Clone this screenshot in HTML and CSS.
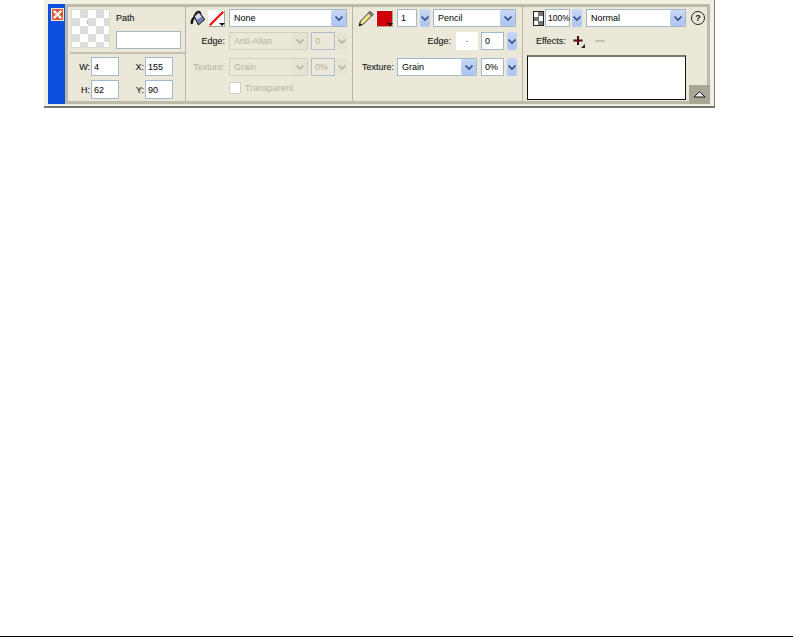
FILE: index.html
```html
<!DOCTYPE html>
<html lang="en">
<head>
<meta charset="utf-8">
<title>Property Inspector</title>
<link rel="stylesheet" href="styles.css">
</head>
<body>
<div class="panel">
  <div class="strip">
    <div class="close"><svg width="9" height="9" viewBox="0 0 9 9"><path d="M1.500 1.500l6 6M7.500 1.500l-6 6" stroke="#fff" stroke-width="2.100" stroke-linecap="square"/></svg></div>
  </div>
  <div class="body">
    <section class="sec s1">
      <div class="s1-top">
        <div class="preview"><i class="mark"></i></div>
        <div class="s1-name">
          <div class="path">Path</div>
          <div class="fld name"></div>
        </div>
      </div>
      <div class="s1-rows">
        <div class="row"><span class="lbl wl">W:</span><div class="fld num">4</div><span class="lbl xl">X:</span><div class="fld num">155</div></div>
        <div class="row"><span class="lbl wl">H:</span><div class="fld num">62</div><span class="lbl xl">Y:</span><div class="fld num">90</div></div>
      </div>
    </section>

    <section class="sec s2">
      <div class="row r1">
        <svg class="ic-bucket" width="15" height="16" viewBox="0 0 15 16"><path d="M5 5.500C5 1.500 9.500-.5 11 3.500" fill="none" stroke="#111" stroke-width="1.300"/><path d="M4 6l5-4 5.500 7.500L8.500 14.500z" fill="#d7dcf2" stroke="#111" stroke-width="1.200"/><path d="M9 14l-2.500-4 5-3 2.500 2.500z" fill="#6f7cb8"/><path d="M4.500 5.500C2 7.500.3 10.500.6 13c.3 1.700 2 1.800 2.400.2.300-1.700.2-3 1.500-4.200z" fill="#111"/></svg>
        <div class="swatch none"><svg width="15" height="15" viewBox="0 0 15 15"><path d="M.8 14.200L14.200.8" stroke="#f00c0c" stroke-width="2.200"/></svg><i class="tick"></i></div>
        <div class="sel w118"><span class="t">None</span><b class="arr"></b></div>
      </div>
      <div class="row r2">
        <span class="lbl side">Edge:</span>
        <div class="sel off w79"><span class="t">Anti-Alias</span><b class="arr"></b></div>
        <div class="fld off sm">0</div>
        <b class="spin off"></b>
      </div>
      <div class="row r3">
        <span class="lbl side dim">Texture:</span>
        <div class="sel off w79"><span class="t">Grain</span><b class="arr"></b></div>
        <div class="fld off sm">0%</div>
        <b class="spin off"></b>
      </div>
      <div class="row r4">
        <i class="check"></i><span class="lbl dim trans">Transparent</span>
      </div>
    </section>

    <section class="sec s3">
      <div class="row r1">
        <svg class="ic-pencil" width="16" height="17" viewBox="0 0 16 17"><path d="M1 16l1.500-5L12 1.500l3 3L5.500 14z" fill="#f0e28c" stroke="#333" stroke-width="1"/><path d="M12 1.500l3 3-1.500 1.500-3-3z" fill="#8f8f8f" stroke="#333" stroke-width=".6"/><path d="M1 16l.8-3 2.200 2z" fill="#111"/></svg>
        <div class="swatch red"><i class="fill"></i><i class="tick"></i></div>
        <div class="fld one">1</div>
        <b class="spin"></b>
        <div class="sel w83"><span class="t">Pencil</span><b class="arr"></b></div>
      </div>
      <div class="row r2">
        <span class="lbl edge3">Edge:</span>
        <div class="dot">&middot;</div>
        <div class="fld sm3">0</div>
        <b class="spin"></b>
      </div>
      <div class="row r3">
        <span class="lbl tex3">Texture:</span>
        <div class="sel w80"><span class="t">Grain</span><b class="arr"></b></div>
        <div class="fld sm3 wide">0%</div>
        <b class="spin"></b>
      </div>
    </section>

    <section class="sec s4">
      <div class="row r1">
        <div class="ic-opacity"></div>
        <div class="fld pct">100%</div>
        <b class="spin"></b>
        <div class="sel w100"><span class="t">Normal</span><b class="arr"></b></div>
        <div class="help">?</div>
      </div>
      <div class="row r2 fx">
        <span class="lbl">Effects:</span>
        <svg class="ic-plus" width="13" height="13" viewBox="0 0 13 13"><path d="M5 1h2v3.500h3.500v2H7V10H5V6.500H1.500v-2H5z" fill="#2a0a0a"/><path d="M5.500 2v7M2.500 5.500h7" stroke="#8a1010" stroke-width=".7"/><path d="M13 9v4H9z" fill="#222"/></svg>
        <i class="minus"></i>
      </div>
      <div class="effects"></div>
    </section>

    <div class="collapse"><svg width="13" height="7" viewBox="0 0 13 7"><path d="M6.500 .8L12 6H1z" fill="#fff" stroke="#111" stroke-width="1"/></svg></div>
  </div>
</div>
<div class="rule"></div>
</body>
</html>
```

FILE: styles.css
```css
* { box-sizing: border-box; }
html, body { height: 100%; }
body {
  margin: 0;
  background: #fff;
  display: flex;
  flex-direction: column;
  font: 9px "Liberation Sans", Arial, sans-serif;
  color: #111;
}
.panel {
  width: 671px;
  height: 108px;
  margin-left: 44px;
  padding: 4px 4px 2px 4px;
  display: flex;
  background: #f1efe3;
  border-bottom: 2px solid #77766c;
  border-right: 1px solid #77766c;
}
.strip {
  width: 17px;
  background: #0a4fe0;
  padding: 4px 0 0 3px;
}
.close {
  width: 13px;
  height: 13px;
  background: #dc5a36;
  border: 1px solid #f8e6da;
  display: flex;
  align-items: center;
  justify-content: center;
}
.body {
  position: relative;
  flex: 1;
  display: flex;
  height: 100px;
  background: #ebe8d9;
  border: 3px solid #bdbaaa;
}
.sec { border-right: 1px solid #b8b5a5; flex: none; }
.row { display: flex; align-items: center; }
.lbl { white-space: nowrap; text-shadow: 0 0 1px rgba(0, 0, 0, .15); }
.s1 { width: 118px; }
.s1-top {
  height: 47px;
  padding: 2px 0 0 1px;
  margin-left: 2px;
  display: flex;
  border-bottom: 2px solid #c4c1b1;
}
.preview {
  position: relative;
  width: 39px;
  height: 39px;
  background-color: #fff;
  background-image: conic-gradient(#dcdcdc 25%, #fff 0 50%, #dcdcdc 0 75%, #fff 0);
  background-size: 16px 16px;
  border: 1px solid #dedbcc;
}
.mark {
  position: absolute;
  left: 15px;
  top: 10px;
  width: 1px;
  height: 4px;
  background: #e8a8a8;
}
.s1-name { margin-left: 6px; }
.path { height: 22px; padding-top: 4px; text-shadow: 0 0 1px rgba(0, 0, 0, .15); }
.fld {
  background: #fff;
  border: 1px solid #a3b7cb;
  height: 19px;
  padding: 0 0 0 2px;
  display: flex;
  align-items: center;
  text-shadow: 0 0 1px rgba(0, 0, 0, .15);
}
.name { width: 65px; height: 18px; }
.s1-rows { padding-top: 3px; }
.s1-rows .row + .row { margin-top: 4px; }
.wl { width: 23px; text-align: right; padding-right: 1px; }
.xl { width: 26px; text-align: right; padding-right: 1px; }
.num { width: 28px; }

.s2 { width: 167px; padding-left: 4px; }
.s3 { width: 170px; padding-left: 5px; }
.s4 { width: 184px; padding-left: 9px; border-right: 0; }
.r1 { height: 18px; margin-top: 2px; }
.r2 { height: 18px; margin-top: 5px; }
.r3 { height: 18px; margin-top: 8px; }
.r4 { height: 12px; margin-top: 6px; }

.ic-bucket { margin-right: 3px; }
.swatch {
  position: relative;
  width: 17px;
  height: 17px;
  background: #fff;
  border: 1px solid #a8a594;
  border-top-color: #f8f8f4;
  border-left-color: #f8f8f4;
  margin-right: 4px;
  display: flex;
  align-items: center;
  justify-content: center;
}
.tick {
  position: absolute;
  right: -1px;
  bottom: 0;
  width: 0;
  height: 0;
  border: 3px solid transparent;
  border-top-color: #111;
  border-bottom: 0;
}
.red .fill { width: 15px; height: 15px; background: #d00008; }
.sel {
  height: 18px;
  display: flex;
  align-items: center;
  justify-content: space-between;
  background: #fff;
  border: 1px solid #a3b7cb;
  padding-left: 4px;
  text-shadow: 0 0 1px rgba(0, 0, 0, .15);
}
.w118 { width: 118px; }
.w79 { width: 79px; }
.w83 { width: 83px; }
.w80 { width: 80px; }
.w100 { width: 100px; }
.arr, .spin {
  background: url("data:image/svg+xml,%3Csvg xmlns='http://www.w3.org/2000/svg' width='10' height='7' viewBox='0 0 10 7'%3E%3Cpath d='M1.500 1.500L5 5l3.500-3.500' fill='none' stroke='%23304f8e' stroke-width='1.700'/%3E%3C/svg%3E") center no-repeat, linear-gradient(#c6d6f5, #aec4ef);
  border-radius: 2px;
}
.arr { width: 15px; height: 16px; }
.spin { width: 10px; height: 18px; margin-left: 2px; }
.side { width: 35px; text-align: right; margin-right: 4px; }
.lbl.dim { color: #b5b2a2; text-shadow: none; }
.sel.off { background: #ebe8d9; border-color: #d2cfbf; color: #b5b2a2; text-shadow: none; }
.off .arr, .spin.off {
  background: url("data:image/svg+xml,%3Csvg xmlns='http://www.w3.org/2000/svg' width='10' height='7' viewBox='0 0 10 7'%3E%3Cpath d='M1.500 1.500L5 5l3.500-3.500' fill='none' stroke='%23bdbaaa' stroke-width='1.800'/%3E%3C/svg%3E") center no-repeat, #e6e3d4;
}
.fld.off { background: #ebe8d9; color: #b5b2a2; border-color: #aebccb; text-shadow: none; }
.sm { width: 24px; height: 18px; margin-left: 3px; padding-left: 3px; }
.check {
  width: 12px;
  height: 12px;
  background: #fff;
  border: 1px solid #d2cfbf;
  margin-left: 39px;
}
.trans { margin-left: 4px; }

.ic-pencil { margin-right: 2px; }
.one { width: 20px; height: 18px; padding-left: 3px; }
.s3 .spin { margin-left: 3px; }
.s3 .r1 .spin { margin-right: 3px; }
.edge3 { width: 93px; text-align: right; margin-right: 5px; }
.dot { width: 22px; height: 18px; background: #fff; display: flex; align-items: center; justify-content: center; }
.sm3 { width: 23px; height: 18px; margin-left: 3px; padding-left: 3px; }
.sm3.wide { margin-left: 4px; }
.tex3 { width: 34px; margin-left: 2px; margin-right: 3px; text-align: right; }

.ic-opacity {
  width: 11px;
  height: 15px;
  margin-left: 1px;
  margin-right: 1px;
  border: 1px solid #222;
  background: conic-gradient(#777 25%, #fff 0 50%, #777 0 75%, #fff 0) 0 0 / 9px 9px;
}
.pct { width: 25px; height: 18px; padding-left: 2px; font-size: 8.500px; }
.s4 .spin { margin: 0 4px 0 2px; }
.help {
  width: 14px;
  height: 14px;
  margin-left: 5px;
  border: 1px solid #222;
  border-radius: 50%;
  display: flex;
  align-items: center;
  justify-content: center;
  font-weight: bold;
}
.fx { margin-left: 4px; }
.ic-plus { margin-left: 6px; }
.minus { width: 10px; height: 2px; background: #c4c1b1; margin-left: 10px; }
.effects {
  width: 159px;
  height: 45px;
  margin: 5px 0 0 -5px;
  background: #fff;
  border: 1px solid #111;
  border-top: 2px solid #77766c;
}
.collapse {
  position: absolute;
  right: -3px;
  bottom: -3px;
  width: 21px;
  height: 19px;
  background: #a9a696;
  display: flex;
  align-items: center;
  justify-content: center;
}
.rule { margin-top: auto; margin-bottom: 1px; height: 1px; background: #000; }
```
